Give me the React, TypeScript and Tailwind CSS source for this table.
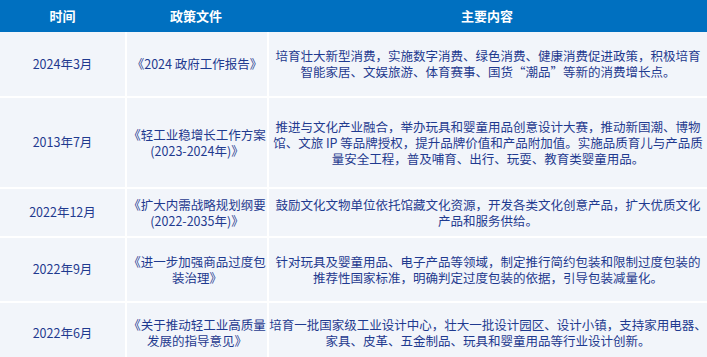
import React from "react";

type Row = { date: string; doc: string[]; content: string[]; h: string };

const rows: Row[] = [
  {
    date: "2024年3月",
    doc: ["《2024 政府工作报告》"],
    content: [
      "培育壮大新型消费，实施数字消费、绿色消费、健康消费促进政策，积极培育",
      "智能家居、文娱旅游、体育赛事、国货“潮品”等新的消费增长点。",
    ],
    h: "h-[64px]",
  },
  {
    date: "2013年7月",
    doc: ["《轻工业稳增长工作方案", "(2023-2024年)》"],
    content: [
      "推进与文化产业融合，举办玩具和婴童用品创意设计大赛，推动新国潮、博物",
      "馆、文旅 IP 等品牌授权，提升品牌价值和产品附加值。实施品质育儿与产品质",
      "量安全工程，普及哺育、出行、玩耍、教育类婴童用品。",
    ],
    h: "h-[89px]",
  },
  {
    date: "2022年12月",
    doc: ["《扩大内需战略规划纲要", "(2022-2035年)》"],
    content: [
      "鼓励文化文物单位依托馆藏文化资源，开发各类文化创意产品，扩大优质文化",
      "产品和服务供给。",
    ],
    h: "h-[47px]",
  },
  {
    date: "2022年9月",
    doc: ["《进一步加强商品过度包", "装治理》"],
    content: [
      "针对玩具及婴童用品、电子产品等领域，制定推行简约包装和限制过度包装的",
      "推荐性国家标准，明确判定过度包装的依据，引导包装减量化。",
    ],
    h: "h-[63px]",
  },
  {
    date: "2022年6月",
    doc: ["《关于推动轻工业高质量", "发展的指导意见》"],
    content: [
      "培育一批国家级工业设计中心，壮大一批设计园区、设计小镇，支持家用电器、",
      "家具、皮革、五金制品、玩具和婴童用品等行业设计创新。",
    ],
    h: "h-[60px]",
  },
];

function Lines({ lines }: { lines: string[] }) {
  return (
    <div className="flex flex-col items-center leading-[16px]">
      {lines.map((l, i) => (
        <span key={i} className="whitespace-nowrap">
          {l}
        </span>
      ))}
    </div>
  );
}

export default function App() {
  return (
    <div
      className="w-[707px] h-[357px] overflow-hidden bg-white text-[12.5px] text-[#1f3a8f]"
      style={{ fontFamily: '"Noto Sans CJK SC", "Noto Sans", sans-serif' }}
    >
      <div className="grid grid-cols-[125px_140px_440px] gap-x-[1px] h-[32px] bg-[#0070c0] text-white font-bold text-[13px]">
        <div className="flex items-center justify-center">时间</div>
        <div className="flex items-center justify-center">政策文件</div>
        <div className="flex items-center justify-center">主要内容</div>
      </div>
      <div className="flex flex-col gap-y-[2px]">
        {rows.map((r, i) => (
          <div key={i} className={`grid grid-cols-[125px_140px_438px] gap-x-[2px] ${r.h}`}>
            <div className="bg-[#f2f5fa] flex items-center justify-center">{r.date}</div>
            <div className="bg-[#f2f5fa] flex items-center justify-center">
              <Lines lines={r.doc} />
            </div>
            <div className="bg-[#f2f5fa] flex items-center justify-center">
              <Lines lines={r.content} />
            </div>
          </div>
        ))}
      </div>
    </div>
  );
}
